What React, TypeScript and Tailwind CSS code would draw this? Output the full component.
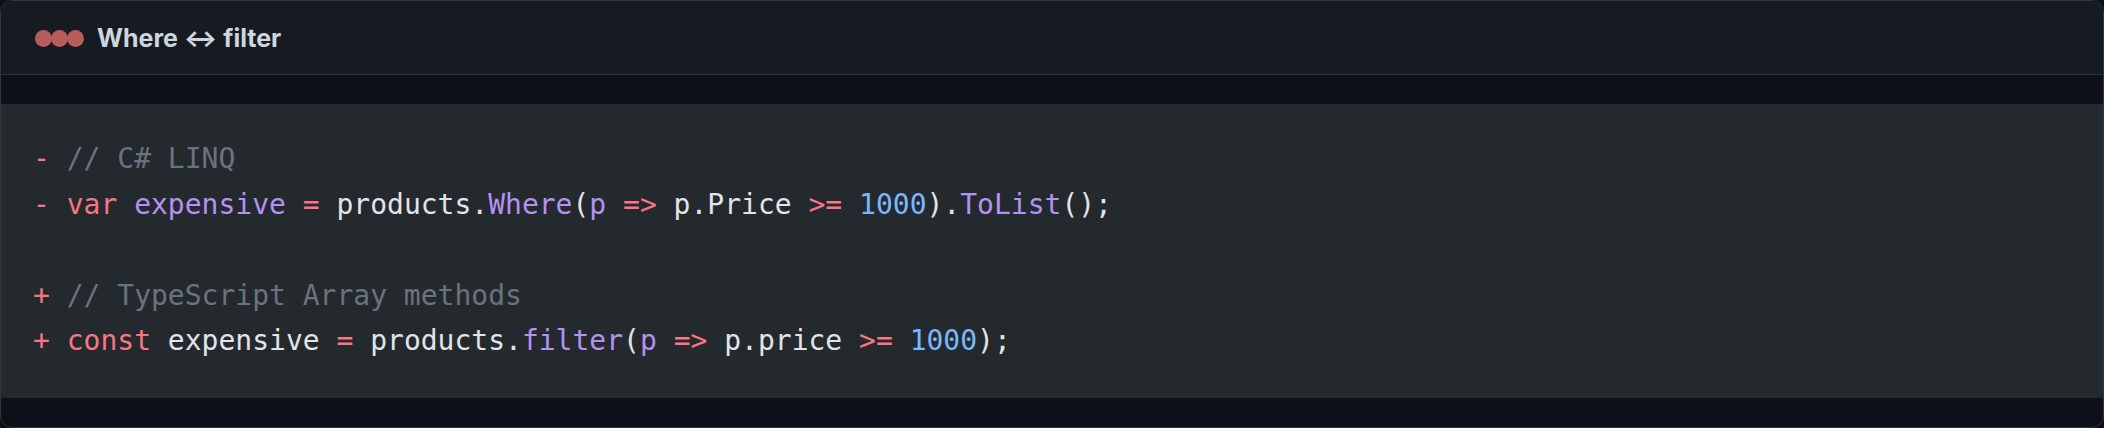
type Token = { t: string; c?: string };

const RED = 'text-[#f97583]';
const PURPLE = 'text-[#b392f0]';
const BLUE = 'text-[#79b8ff]';
const GRAY = 'text-[#6a737d]';

const lines: Token[][] = [
	[
		{ t: '-', c: RED },
		{ t: ' // C# LINQ', c: GRAY },
	],
	[
		{ t: '- ', c: RED },
		{ t: 'var', c: RED },
		{ t: ' ' },
		{ t: 'expensive', c: PURPLE },
		{ t: ' ' },
		{ t: '=', c: RED },
		{ t: ' products.' },
		{ t: 'Where', c: PURPLE },
		{ t: '(' },
		{ t: 'p', c: PURPLE },
		{ t: ' ' },
		{ t: '=>', c: RED },
		{ t: ' p.Price ' },
		{ t: '>=', c: RED },
		{ t: ' ' },
		{ t: '1000', c: BLUE },
		{ t: ').' },
		{ t: 'ToList', c: PURPLE },
		{ t: '();' },
	],
	[],
	[
		{ t: '+', c: RED },
		{ t: ' // TypeScript Array methods', c: GRAY },
	],
	[
		{ t: '+ ', c: RED },
		{ t: 'const', c: RED },
		{ t: ' expensive ' },
		{ t: '=', c: RED },
		{ t: ' products.' },
		{ t: 'filter', c: PURPLE },
		{ t: '(' },
		{ t: 'p', c: PURPLE },
		{ t: ' ' },
		{ t: '=>', c: RED },
		{ t: ' p.price ' },
		{ t: '>=', c: RED },
		{ t: ' ' },
		{ t: '1000', c: BLUE },
		{ t: ');' },
	],
];

export default function App() {
	return (
		<div className="w-full h-[428px] bg-[#0d1117]">
			<div className="h-full flex flex-col rounded-[12px] border border-[#30363d] overflow-hidden bg-[#0d1117]">
				{/* title bar */}
				<div className="h-[74px] shrink-0 flex items-center gap-[13px] pl-[34px] pt-[2px] bg-[#161b22] border-b border-[#30363d]">
					<div className="flex items-center">
						<span className="w-[17px] h-[17px] rounded-full bg-[#b75b5b]" />
						<span className="w-[17px] h-[17px] -ml-[1px] rounded-full bg-[#b75b5b]" />
						<span className="w-[17px] h-[17px] -ml-[1px] rounded-full bg-[#b75b5b]" />
					</div>
					<span className="text-[25px] font-bold text-[#ced5de] font-['Inter',sans-serif] leading-none">
						Where ↔ filter
					</span>
				</div>

				{/* code */}
				<div className="flex-1 py-[29px]">
					<pre className="h-full px-8 py-8 bg-[#24292e] text-[#e1e4e8] text-[28px] leading-[1.625] font-['DejaVu_Sans_Mono',monospace] whitespace-pre">
						{lines.map((line, i) => (
							<div key={i}>
								{line.length === 0 ? ' ' : line.map((tok, j) => (
									<span key={j} className={tok.c}>
										{tok.t}
									</span>
								))}
							</div>
						))}
					</pre>
				</div>
			</div>
		</div>
	);
}
